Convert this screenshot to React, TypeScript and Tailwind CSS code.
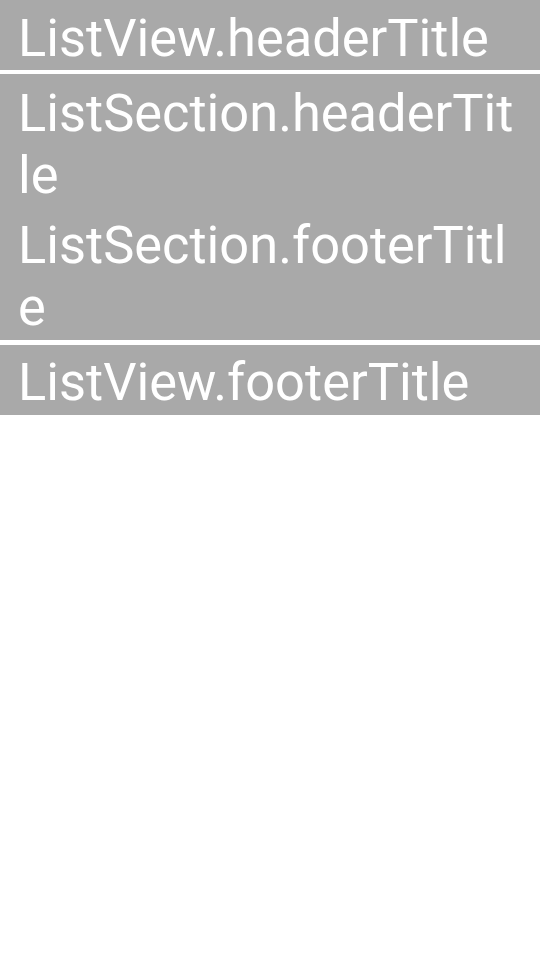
export default function App() {
  const font = { fontFamily: "Roboto, 'Noto Sans', sans-serif" };
  return (
    <div className="w-[540px] h-[960px] bg-white flex flex-col" style={font}>
      <div className="bg-[#a9a9a9] text-white text-[52.4px] leading-[62px] pl-[18px] pr-[18px] pt-[7px] pb-[1px] break-all">
        ListView.headerTitle
      </div>
      <div className="h-[4px]" />
      <div className="bg-[#a9a9a9] text-white text-[52.4px] leading-[62px] pl-[18px] pr-[18px] pt-[8px] pb-[2px] break-all flex flex-col gap-[8px]">
        <div>ListSection.headerTitle</div>
        <div>ListSection.footerTitle</div>
      </div>
      <div className="h-[5px]" />
      <div className="bg-[#a9a9a9] text-white text-[52.4px] leading-[62px] pl-[18px] pr-[18px] pt-[6px] pb-[2px] break-all">
        ListView.footerTitle
      </div>
    </div>
  );
}
